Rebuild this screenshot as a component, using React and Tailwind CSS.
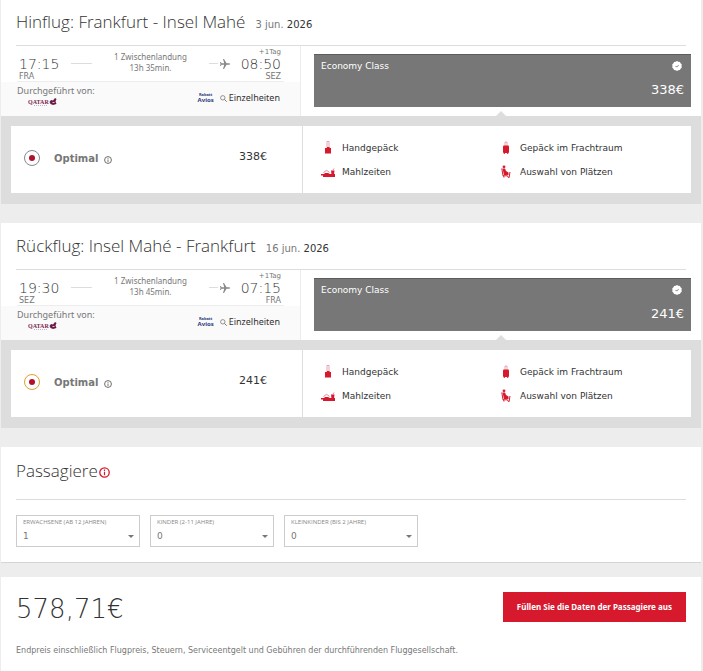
import React from "react";
import { MdLocalAirport } from "react-icons/md";

const flights = [
  {
    id: "hin",
    title: "Hinflug: Frankfurt - Insel Mahé",
    day: "3 jun.",
    year: "2026",
    dep: "17:15",
    from: "FRA",
    arr: "08:50",
    to: "SEZ",
    duration: "13h 35min.",
    price: "338€",
    ring: "border-[#888888]",
  },
  {
    id: "rueck",
    title: "Rückflug: Insel Mahé - Frankfurt",
    day: "16 jun.",
    year: "2026",
    dep: "19:30",
    from: "SEZ",
    arr: "07:15",
    to: "FRA",
    duration: "13h 45min.",
    price: "241€",
    ring: "border-[#e0a030]",
  },
];

const passengers = [
  { id: "adults", label: "ERWACHSENE (AB 12 JAHREN)", value: "1", width: "w-[124px]" },
  { id: "children", label: "KINDER (2-11 JAHRE)", value: "0", width: "w-[124px]" },
  { id: "infants", label: "KLEINKINDER (BIS 2 JAHRE)", value: "0", width: "w-[134px]" },
];

function QatarLogo() {
  return (
    <svg width="30" height="9" viewBox="0 0 30 9" role="img" aria-label="Qatar Airways">
      <text x="0" y="7" fontSize="6" fontWeight="bold" fontFamily="Liberation Serif, serif" fill="#7a1f4c">QATAR</text>
      <path d="M21.5 5 L23 3 L25 3.4 L27 1 L28.500 2 L27.500 4.5 L28.500 7 L25 8 L22.5 7 Z" fill="#6d1a45" />
      <path d="M24.500 5.500 H26.500" stroke="#fafafa" strokeWidth="0.8" />
      <path d="M6 8.500 H20" stroke="#c9afbd" strokeWidth="1" strokeDasharray="1 1" />
    </svg>
  );
}

function AviosLogo() {
  return (
    <span className="flex w-4 flex-col items-center font-['Noto_Sans',sans-serif] text-[#2c3f7c]">
      <span className="text-[4px] leading-[4px] font-bold">Rabatt</span>
      <span className="text-[6px] leading-[7px] font-bold">Avios</span>
    </span>
  );
}

function InfoIcon({ size, className }) {
  return (
    <svg width={size} height={size} viewBox="0 0 11 11" className={className} fill="none" stroke="currentColor" aria-hidden="true">
      <circle cx="5.5" cy="5.5" r="4.7" strokeWidth="1.3" />
      <path d="M5.5 4.8 V8.3 M5.5 2.6 V3.9" strokeWidth="1.2" />
    </svg>
  );
}

function SearchIcon() {
  return (
    <svg width="7" height="7" viewBox="0 0 7 7" fill="none" stroke="#777777" aria-hidden="true">
      <circle cx="2.8" cy="2.8" r="2.2" strokeWidth="0.8" />
      <path d="M4.4 4.4 L6.7 6.7" strokeWidth="1" />
    </svg>
  );
}

function CheckBadge() {
  return (
    <svg width="10" height="10" viewBox="0 0 10 10" className="mr-[2px]" aria-hidden="true">
      <path d="M5 0 L6.3 .8 L7.9 .9 L8.6 2.3 L9.8 3.4 L9.5 5 L9.8 6.6 L8.6 7.7 L7.9 9.1 L6.3 9.2 L5 10 L3.7 9.2 L2.1 9.1 L1.4 7.7 L.2 6.6 L.5 5 L.2 3.4 L1.4 2.3 L2.1 .9 L3.7 .8 Z" fill="#fff" />
      <path d="M3.5 5 L4.6 6.1 L6.5 4.2" stroke="#777" strokeWidth="1" fill="none" />
    </svg>
  );
}

function CabinBagIcon() {
  return (
    <svg width="14" height="13" viewBox="0 0 14 13" aria-hidden="true">
      <path d="M6 7 V0.500 H8 V7" stroke="#e0909c" strokeWidth="0.8" fill="none" />
      <path d="M4 7 H6 V6 H8.500 V7 H10 V12.500 H4 Z" fill="#d7192d" />
    </svg>
  );
}

function HoldBagIcon() {
  return (
    <svg width="14" height="13" viewBox="0 0 14 13" aria-hidden="true">
      <path d="M6 5 V1 H8 V5" stroke="#e0909c" strokeWidth="0.8" fill="none" />
      <rect x="4" y="4.500" width="6" height="7.500" rx="1" fill="#d7192d" />
      <path d="M4.700 12.300 H6 M8 12.300 H9.300" stroke="#d7192d" />
    </svg>
  );
}

function MealIcon() {
  return (
    <svg width="14" height="13" viewBox="0 0 14 13" aria-hidden="true">
      <path d="M0 9 H3 L4 8 H7 L9 9 H14 V12 H2 V10.500 H0 Z" fill="#d7192d" />
      <path d="M2.500 8 Q5 3.500 8.500 7.500" stroke="#e0909c" fill="none" />
      <path d="M10 5.500 H13.500 L13 9.500 H10.500 Z" fill="#d7192d" />
      <path d="M11.800 5.500 L13 3.500" stroke="#e0909c" />
    </svg>
  );
}

function SeatIcon() {
  return (
    <svg width="14" height="13" viewBox="0 0 14 13" aria-hidden="true">
      <circle cx="5" cy="1.800" r="1.400" fill="#d7192d" />
      <path d="M3.500 3.500 H6 L7 6 L9.500 7.500 V10 H5 Z" fill="#d7192d" />
      <path d="M2.800 3.500 L4 10.800 H8.500 L9.500 12.800 M11 7 L10 12.800 M4.500 10.500 L5 12.500" stroke="#d7192d" fill="none" />
    </svg>
  );
}

const features = [
  { label: "Handgepäck", Icon: CabinBagIcon },
  { label: "Gepäck im Frachtraum", Icon: HoldBagIcon },
  { label: "Mahlzeiten", Icon: MealIcon },
  { label: "Auswahl von Plätzen", Icon: SeatIcon },
];

function Flight({ flight }) {
  return (
    <section className="bg-white">
      <header className="flex h-[46px] items-baseline gap-[10px] px-[15px] pt-[11px]">
        <h2 className="font-['Open_Sans',sans-serif] text-[17px] leading-6 font-light text-[#333333]">{flight.title}</h2>
        <p className="text-[10px] text-[#777777]">
          {flight.day} <span className="text-[#333333]">{flight.year}</span>
        </p>
      </header>
      <div className="mx-[15px] h-px bg-[#dddddd]" />
      <div className="flex h-[70px]">
        <div className="flex w-[300px] flex-col border-r border-[#ededed]">
          <div className="mr-4 ml-4 flex h-9 border-b border-[#ededed] pr-[3px] pl-[2px]">
            <div className="w-[52px] pt-[10px] text-[#777777]">
              <p className="text-sm leading-4 font-extralight text-[#333333]">{flight.dep}</p>
              <p className="text-[8px] leading-[9px]">{flight.from}</p>
            </div>
            <div className="mt-[17px] h-px w-[21px] bg-[#dddddd]" />
            <div className="flex-1 pt-[5px] text-center font-['Noto_Sans',sans-serif] text-[8px] leading-[11px] text-[#777777]">
              <p>1 Zwischenlandung</p>
              <p>{flight.duration}</p>
            </div>
            <div className="flex h-[35px] items-center gap-px text-[#888888]">
              <span className="h-px w-[9px] bg-[#dddddd]" />
              <MdLocalAirport size={12} className="rotate-90" />
            </div>
            <div className="w-[50px] pt-[2px] text-right text-[#777777]">
              <p className="text-[7px] leading-[8px]">+1Tag</p>
              <p className="text-sm leading-4 font-extralight text-[#333333]">{flight.arr}</p>
              <p className="text-[8px] leading-[9px]">{flight.to}</p>
            </div>
          </div>
          <div className="flex flex-1 justify-between bg-[#fafafa] pr-5 pl-4">
            <div className="pt-[3px]">
              <p className="font-['Noto_Sans',sans-serif] text-[9px] leading-3 text-[#777777]">Durchgeführt von:</p>
              <div className="pl-[11px]"><QatarLogo /></div>
            </div>
            <div className="flex items-center gap-[6px] pb-[2px]">
              <AviosLogo />
              <a href="#details" className="flex items-center gap-[2px] font-['Noto_Sans',sans-serif] text-[9px] text-[#333333]">
                <SearchIcon />
                Einzelheiten
              </a>
            </div>
          </div>
        </div>
        <div className="relative flex-1 pt-2 pr-[10px] pl-[13px]">
          <button type="button" className="flex h-[53px] w-full flex-col justify-between border-t border-[#5c5c5c] bg-[#777777] px-[7px] pt-1 pb-[9px] text-white">
            <span className="flex w-full items-center justify-between text-[9px] leading-[14px]">
              Economy Class
              <CheckBadge />
            </span>
            <span className="w-full text-right text-[13px] leading-4">{flight.price}</span>
          </button>
          <span className="absolute bottom-0 left-1/2 -translate-x-1/2 border-x-5 border-b-5 border-x-transparent border-b-[#dddddd]" />
        </div>
      </div>
      <div className="bg-[#dddddd] px-[10px] pt-[10px] pb-[11px]">
        <div className="flex h-[67px] bg-white">
          <label className="flex w-[292px] items-center border-r border-[#dddddd] pr-[35px] pb-1 pl-[13px]">
            <span className={`flex h-4 w-4 items-center justify-center rounded-full border ${flight.ring}`}>
              <input type="radio" name={flight.id} defaultChecked className="h-[6px] w-[6px] appearance-none rounded-full bg-[#b0122a]" />
            </span>
            <span className="ml-[14px] pt-[2px] text-[10px] font-bold text-[#777777]">Optimal</span>
            <InfoIcon size={8} className="mt-1 ml-[6px] text-[#666666]" />
            <span className="ml-auto text-[11px] text-[#333333]">{flight.price}</span>
          </label>
          <ul className="grid flex-1 grid-cols-[178px_1fr] content-start gap-y-[11px] pt-[15px] pl-[18px] text-[9px] leading-3 text-[#333333]">
            {features.map(({ label, Icon }) => (
              <li key={label} className="flex items-center gap-[7px]">
                <Icon />
                {label}
              </li>
            ))}
          </ul>
        </div>
      </div>
    </section>
  );
}

export default function App() {
  return (
    <main className="min-h-screen overflow-hidden bg-[#ededed] pr-[2px] pl-px font-['DejaVu_Sans',Verdana,sans-serif]">
      <div className="-mt-px flex flex-col gap-[19px]">
        {flights.map((flight) => (
          <Flight key={flight.id} flight={flight} />
        ))}
        <section className="h-[116px] border-b border-[#d5d5d5] bg-white px-[15px]">
          <h2 className="flex h-[53px] items-center gap-px border-b border-[#dddddd] pb-[5px] font-['Open_Sans',sans-serif] text-[17px] font-light text-[#333333]">
            Passagiere
            <InfoIcon size={11} className="mt-1 text-[#d7192d]" />
          </h2>
          <div className="flex gap-[10px] pt-[15px]">
            {passengers.map((p) => (
              <div key={p.id} className={`relative h-8 border border-[#cccccc] px-[6px] pt-[2px] ${p.width}`}>
                <label htmlFor={p.id} className="block font-['Open_Sans',sans-serif] text-[6px] leading-[9px] whitespace-nowrap text-[#888888]">{p.label}</label>
                <select id={p.id} defaultValue={p.value} className="block h-[18px] w-full appearance-none text-[9px] leading-[18px] text-[#777777]">
                  <option>0</option>
                  <option>1</option>
                  <option>2</option>
                </select>
                <span className="pointer-events-none absolute right-[5px] bottom-2 border-x-3 border-t-3 border-x-transparent border-t-[#777777]" />
              </div>
            ))}
          </div>
        </section>
      </div>
      <section className="mt-[14px] bg-white px-[15px] pt-[15px] pb-4">
        <div className="flex items-start justify-between">
          <p className="text-[26px] leading-[34px] font-extralight text-[#333333]">578,71€</p>
          <button type="button" className="h-[30px] bg-[#d7192d] px-[14px] font-['Noto_Sans',sans-serif] text-[8px] font-bold text-white">Füllen Sie die Daten der Passagiere aus</button>
        </div>
        <p className="mt-[19px] text-[8px] text-[#777777]">Endpreis einschließlich Flugpreis, Steuern, Serviceentgelt und Gebühren der durchführenden Fluggesellschaft.</p>
      </section>
    </main>
  );
}
